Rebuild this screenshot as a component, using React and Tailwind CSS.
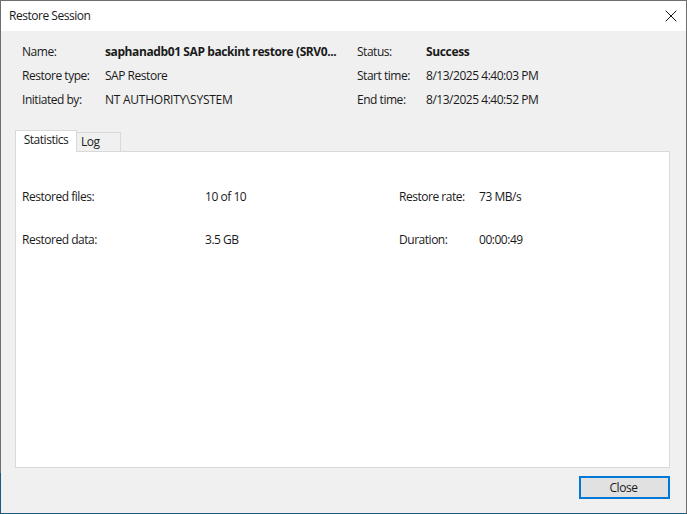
import { X } from 'lucide-react';

const font = { fontFamily: '"Open Sans", "Noto Sans", sans-serif' };

function InfoRow({ label, value, bold, wide }) {
  return (
    <div className="flex h-6 items-center">
      <span className="w-[83px] shrink-0">{label}</span>
      <span className={bold ? 'font-bold tracking-[-0.4px] whitespace-nowrap' : wide ? 'tracking-[-0.25px] whitespace-nowrap' : 'whitespace-nowrap'}>{value}</span>
    </div>
  );
}

function StatRow({ label, value, label2, value2 }) {
  return (
    <div className="flex h-[18px] items-center">
      <span className="w-[183px] shrink-0">{label}</span>
      <span className="w-[194px] shrink-0">{value}</span>
      <span className="w-[80px] shrink-0">{label2}</span>
      <span>{value2}</span>
    </div>
  );
}

export default function App() {
  return (
    <div
      className="relative flex h-[514px] w-[687px] flex-col border border-[#6e6e6e] border-b-[#1a5a7e] bg-[#f0f0f0] text-[12px] tracking-[-0.47px] text-[#1a1a1a]"
      style={font}
    >
      {/* Title bar */}
      <div className="flex h-[30px] shrink-0 items-center justify-between bg-white pl-2 pr-[5px]">
        <span>Restore Session</span>
        <X size={20} strokeWidth={1.2} className="text-[#111]" />
      </div>

      {/* Session summary */}
      <div className="flex pl-[21px] pt-[9px]">
        <div className="w-[335px] shrink-0">
          <InfoRow label="Name:" value="saphanadb01 SAP backint restore (SRV0..." bold />
          <InfoRow label="Restore type:" value="SAP Restore" />
          <InfoRow label="Initiated by:" value="NT AUTHORITY\SYSTEM" wide />
        </div>
        <div>
          <div className="flex h-6 items-center">
            <span className="w-[69px] shrink-0">Status:</span>
            <span className="font-bold tracking-[-0.35px]">Success</span>
          </div>
          <div className="flex h-6 items-center">
            <span className="w-[69px] shrink-0">Start time:</span>
            <span>8/13/2025 4:40:03 PM</span>
          </div>
          <div className="flex h-6 items-center">
            <span className="w-[69px] shrink-0">End time:</span>
            <span>8/13/2025 4:40:52 PM</span>
          </div>
        </div>
      </div>

      {/* Tabs */}
      <div className="relative z-10 ml-[14px] mt-[18px] flex h-[22px] items-start">
        <div className="flex h-[22px] w-[62px] items-center justify-center border border-b-0 border-[#d9d9d9] bg-white pb-[4px]">
          Statistics
        </div>
        <div className="mt-[2px] flex h-[19px] w-[44px] items-center border border-l-0 border-b-0 border-[#d9d9d9] bg-[#f0f0f0] pl-[4px]">
          Log
        </div>
      </div>

      {/* Tab panel */}
      <div className="-mt-px ml-[14px] flex h-[317px] w-[655px] flex-col gap-[25px] border border-[#d9d9d9] bg-white pl-[6px] pt-[36px]">
        <StatRow label="Restored files:" value="10 of 10" label2="Restore rate:" value2="73 MB/s" />
        <StatRow label="Restored data:" value="3.5 GB" label2="Duration:" value2="00:00:49" />
      </div>

      {/* Footer */}
      <div className="flex justify-end pr-[16px] pt-[8px]">
        <button className="h-[23px] w-[91px] border-2 border-[#0078d7] bg-[#e1e1e1] pr-[2px] text-center">Close</button>
      </div>

      {/* Blue window edge showing below the grey one */}
      <div className="absolute bottom-[-1px] left-[-1px] top-[472px] w-px bg-[#1a5a7e]" />
    </div>
  );
}
